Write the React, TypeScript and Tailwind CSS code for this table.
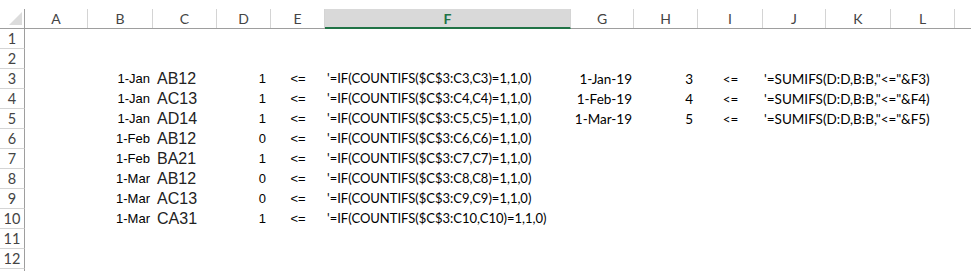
import React from "react";

const cols = [
  { key: "A", w: "w-[63px]" },
  { key: "B", w: "w-[65px]" },
  { key: "C", w: "w-[64px]" },
  { key: "D", w: "w-[54px]" },
  { key: "E", w: "w-[54px]" },
  { key: "F", w: "w-[246px]" },
  { key: "G", w: "w-[63px]" },
  { key: "H", w: "w-[64px]" },
  { key: "I", w: "w-[65px]" },
  { key: "J", w: "w-[63px]" },
  { key: "K", w: "w-[65px]" },
  { key: "L", w: "w-[64px]" },
  { key: "", w: "w-[64px]" },
];

type Row = {
  b?: string;
  c?: string;
  d?: string;
  f?: string;
  g?: string;
  h?: string;
  j?: string;
};

const data: Row[] = [
  {},
  {},
  { b: "1-Jan", c: "AB12", d: "1", f: "'=IF(COUNTIFS($C$3:C3,C3)=1,1,0)", g: "1-Jan-19", h: "3", j: "'=SUMIFS(D:D,B:B,\"<=\"&F3)" },
  { b: "1-Jan", c: "AC13", d: "1", f: "'=IF(COUNTIFS($C$3:C4,C4)=1,1,0)", g: "1-Feb-19", h: "4", j: "'=SUMIFS(D:D,B:B,\"<=\"&F4)" },
  { b: "1-Jan", c: "AD14", d: "1", f: "'=IF(COUNTIFS($C$3:C5,C5)=1,1,0)", g: "1-Mar-19", h: "5", j: "'=SUMIFS(D:D,B:B,\"<=\"&F5)" },
  { b: "1-Feb", c: "AB12", d: "0", f: "'=IF(COUNTIFS($C$3:C6,C6)=1,1,0)" },
  { b: "1-Feb", c: "BA21", d: "1", f: "'=IF(COUNTIFS($C$3:C7,C7)=1,1,0)" },
  { b: "1-Mar", c: "AB12", d: "0", f: "'=IF(COUNTIFS($C$3:C8,C8)=1,1,0)" },
  { b: "1-Mar", c: "AC13", d: "0", f: "'=IF(COUNTIFS($C$3:C9,C9)=1,1,0)" },
  { b: "1-Mar", c: "CA31", d: "1", f: "'=IF(COUNTIFS($C$3:C10,C10)=1,1,0)" },
  {},
  {},
];

const arial = "font-['Liberation_Sans',Arial,sans-serif]";
const calibri = "font-['Lato','Open_Sans',sans-serif]";

const App = () => {
  return (
    <div className="w-[971px] h-[271px] overflow-hidden bg-white text-black">
      <div className="h-[9px]" />
      {/* column headers */}
      <div className={`flex h-[20px] border-b border-[#9e9e9e] ${calibri} text-[14px] text-[#444]`}>
        <div className="w-[25px] shrink-0 border-r border-[#9e9e9e] relative">
          <svg className="absolute left-[9px] top-[3px]" width="13" height="13" viewBox="0 0 13 13">
            <polygon points="13,0 13,13 0,13" fill="#dcdcdc" />
          </svg>
        </div>
        {cols.map((c, i) =>
          c.key === "F" ? (
            <div
              key={i}
              className={`${c.w} shrink-0 flex items-center justify-center bg-[#d9d9d9] border-b-2 border-[#217346] -mb-px font-bold text-[#217346] border-r border-r-[#d4d4d4]`}
            >
              {c.key}
            </div>
          ) : (
            <div key={i} className={`${c.w} shrink-0 flex items-center justify-center border-r border-[#d4d4d4]`}>
              {c.key}
            </div>
          )
        )}
      </div>
      {/* rows */}
      {data.map((r, i) => (
        <div key={i} className="flex h-[20px] items-center">
          <div className={`w-[25px] h-full shrink-0 border-r border-[#9e9e9e] border-b border-b-[#d4d4d4] flex items-center justify-center ${calibri} text-[14.5px] text-[#444]`}>
            {i + 1}
          </div>
          <div className="w-[63px] shrink-0" />
          <div className={`w-[65px] shrink-0 pr-[3px] text-right ${arial} text-[13px]`}>{r.b}</div>
          <div className={`w-[64px] shrink-0 pl-[4px] ${arial} text-[16px] text-[#222]`}>{r.c}</div>
          <div className={`w-[54px] shrink-0 pr-[5px] text-right ${arial} text-[13px]`}>{r.d}</div>
          <div className={`w-[54px] shrink-0 text-center ${arial} text-[13px]`}>{r.b ? "<=" : ""}</div>
          <div className={`w-[246px] shrink-0 pl-[2px] whitespace-nowrap ${calibri} text-[13px]`}>{r.f}</div>
          <div className={`w-[63px] shrink-0 pr-[2px] text-right whitespace-nowrap ${calibri} text-[13.5px]`}>{r.g}</div>
          <div className={`w-[64px] shrink-0 pr-[5px] text-right ${calibri} text-[13.5px]`}>{r.h}</div>
          <div className={`w-[65px] shrink-0 text-center ${calibri} text-[13.5px]`}>{r.h ? "<=" : ""}</div>
          <div className={`w-[63px] shrink-0 pl-[1px] whitespace-nowrap overflow-visible ${calibri} text-[13.5px]`}>{r.j}</div>
        </div>
      ))}
      <div className="flex h-[20px]">
        <div className="w-[25px] h-full shrink-0 border-r border-[#9e9e9e]" />
      </div>
    </div>
  );
};

export default App;
